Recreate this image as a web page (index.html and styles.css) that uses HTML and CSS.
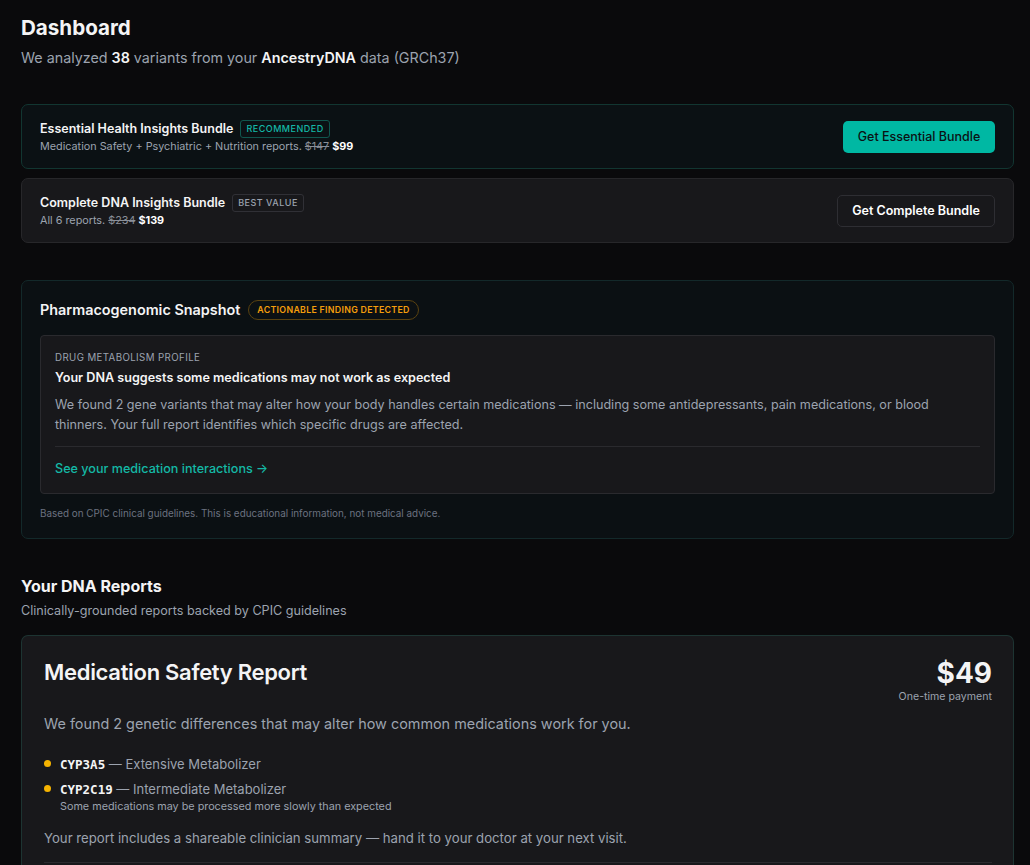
FILE: index.html
```html
<!DOCTYPE html>
<html lang="en">
<head>
    <meta charset="UTF-8">
    <meta name="viewport" content="width=device-width, initial-scale=1.0">
    <title>Dashboard</title>
    <link rel="stylesheet" href="styles.css">
</head>
<body>
    <div class="page">
        <header class="page-head">
            <h1>Dashboard</h1>
            <p class="lead">We analyzed <strong>38</strong> variants from your <strong>AncestryDNA</strong> data (GRCh37)</p>
        </header>

        <!-- Bundle offers -->
        <section class="bundles">
            <div class="bundle bundle-essential">
                <div class="bundle-info">
                    <div class="bundle-title">Essential Health Insights Bundle <span class="tag tag-teal">RECOMMENDED</span></div>
                    <div class="bundle-sub">Medication Safety + Psychiatric + Nutrition reports. <s>$147</s> <b>$99</b></div>
                </div>
                <button class="btn btn-primary">Get Essential Bundle</button>
            </div>
            <div class="bundle bundle-complete">
                <div class="bundle-info">
                    <div class="bundle-title">Complete DNA Insights Bundle <span class="tag tag-gray">BEST VALUE</span></div>
                    <div class="bundle-sub">All 6 reports. <s>$234</s> <b>$139</b></div>
                </div>
                <button class="btn btn-outline">Get Complete Bundle</button>
            </div>
        </section>

        <!-- Snapshot -->
        <section class="snapshot">
            <div class="snapshot-head">
                <h2>Pharmacogenomic Snapshot</h2>
                <span class="pill">ACTIONABLE FINDING DETECTED</span>
            </div>
            <div class="profile">
                <div class="eyebrow">DRUG METABOLISM PROFILE</div>
                <h3>Your DNA suggests some medications may not work as expected</h3>
                <p>We found 2 gene variants that may alter how your body handles certain medications — including some antidepressants, pain medications, or blood thinners. Your full report identifies which specific drugs are affected.</p>
                <a class="profile-link" href="#">See your medication interactions →</a>
            </div>
            <p class="fineprint">Based on CPIC clinical guidelines. This is educational information, not medical advice.</p>
        </section>

        <!-- Reports -->
        <section class="reports">
            <h2>Your DNA Reports</h2>
            <p class="reports-sub">Clinically-grounded reports backed by CPIC guidelines</p>

            <div class="report">
                <div class="report-top">
                    <h3>Medication Safety Report</h3>
                    <div class="price">
                        <div class="price-amount">$49</div>
                        <div class="price-note">One-time payment</div>
                    </div>
                </div>
                <p class="report-lead">We found 2 genetic differences that may alter how common medications work for you.</p>
                <ul class="genes">
                    <li><span class="dot"></span><div><code>CYP3A5</code> — Extensive Metabolizer</div></li>
                    <li><span class="dot"></span><div><code>CYP2C19</code> — Intermediate Metabolizer<div class="gene-note">Some medications may be processed more slowly than expected</div></div></li>
                </ul>
                <p class="report-foot">Your report includes a shareable clinician summary — hand it to your doctor at your next visit.</p>
                <div class="report-rule"></div>
            </div>
        </section>
    </div>
</body>
</html>
```

FILE: styles.css
```css
body {
    margin: 0;
    background-color: #0a0a0c;
    color: #f4f4f5;
    font-family: Inter, "Noto Sans", sans-serif;
}
.page {
    width: 993px;
    padding: 14px 0 0 21px;
}
.page-head h1 {
    margin: 0;
    font-size: 20.6px;
    font-weight: 700;
    line-height: 28px;
}
.lead {
    margin: 6px 0 0;
    font-size: 14.3px;
    line-height: 20px;
    color: #9ca3af;
}
.lead strong {
    color: #f4f4f5;
    font-weight: 600;
}

/* bundles */
.bundles {
    margin-top: 36px;
    display: flex;
    flex-direction: column;
    gap: 9px;
}
.bundle {
    display: flex;
    align-items: center;
    justify-content: space-between;
    height: 65px;
    box-sizing: border-box;
    padding: 0 18px;
    border-radius: 7px;
    border: 1px solid #27272a;
    background-color: #18181b;
}
.bundle-essential {
    background-color: #0b1114;
    border-color: #123631;
}
.bundle-info {
    padding-top: 2px;
}
.bundle-title {
    font-size: 12.5px;
    line-height: 18px;
    font-weight: 600;
    display: flex;
    align-items: center;
    gap: 7px;
}
.bundle-sub {
    font-size: 10.8px;
    line-height: 16px;
    color: #9ca3af;
    margin-top: 1px;
}
.bundle-sub s {
    color: #8a8f98;
}
.bundle-sub b {
    color: #fff;
}
.tag {
    font-size: 9px;
    line-height: 12px;
    font-weight: 500;
    letter-spacing: 0.5px;
    padding: 2px 5px;
    border-radius: 3px;
    border: 1px solid;
}
.tag-teal {
    color: #14b8a6;
    border-color: #10564e;
}
.tag-gray {
    color: #9ca3af;
    border-color: #303036;
}
.btn {
    font-family: inherit;
    font-size: 12.5px;
    height: 32px;
    border-radius: 5px;
    cursor: pointer;
}
.btn-primary {
    background-color: #00b8a3;
    color: #0b1114;
    border: none;
    font-weight: 500;
    padding: 0 10px;
    width: 152px;
}
.btn-outline {
    background-color: #18181b;
    color: #fff;
    border: 1px solid #2e2e33;
    font-weight: 600;
    padding: 0 14px;
    width: 158px;
}

/* snapshot */
.snapshot {
    margin-top: 37px;
    background-color: #0b1013;
    border: 1px solid #13292a;
    border-radius: 7px;
    padding: 18px 18px 18px;
}
.snapshot-head {
    display: flex;
    align-items: center;
    gap: 8px;
    height: 22px;
}
.snapshot-head h2 {
    margin: 0;
    font-size: 14.4px;
    line-height: 22px;
    font-weight: 600;
}
.pill {
    font-size: 8.8px;
    line-height: 12px;
    font-weight: 600;
    letter-spacing: 0.3px;
    color: #f59e0b;
    border: 1px solid #5a4210;
    border-radius: 10px;
    padding: 3px 8px;
}
.profile {
    margin-top: 14px;
    background-color: #18181b;
    border: 1px solid #2a2a2e;
    border-radius: 4px;
    padding: 15px 14px 15px;
}
.eyebrow {
    font-size: 9.7px;
    line-height: 14px;
    letter-spacing: 0.4px;
    color: #9ca3af;
}
.profile h3 {
    margin: 4px 0 0;
    font-size: 12.6px;
    line-height: 18px;
    font-weight: 600;
}
.profile p {
    margin: 8px 0 0;
    font-size: 12.6px;
    line-height: 20px;
    color: #9ca3af;
    padding-bottom: 11px;
    border-bottom: 1px solid #2a2a2e;
}
.profile-link {
    display: block;
    margin-top: 13px;
    font-size: 12.6px;
    line-height: 18px;
    font-weight: 500;
    color: #14b8a6;
    text-decoration: none;
}
.fineprint {
    margin: 12px 0 0;
    font-size: 9.9px;
    line-height: 14px;
    color: #6b7280;
}

/* reports */
.reports {
    margin-top: 36px;
}
.reports h2 {
    margin: 0;
    font-size: 16px;
    line-height: 22px;
    font-weight: 700;
}
.reports-sub {
    margin: 5px 0 0;
    font-size: 12.6px;
    line-height: 18px;
    color: #9ca3af;
}
.report {
    margin-top: 15px;
    background-color: #18181b;
    border: 1px solid #1d3432;
    border-bottom: none;
    border-radius: 7px 7px 0 0;
    padding: 20px 21px 0 22px;
}
.report-top {
    display: flex;
    justify-content: space-between;
    align-items: flex-start;
}
.report-top h3 {
    margin: 2px 0 0;
    font-size: 22px;
    line-height: 28px;
    font-weight: 600;
    letter-spacing: -0.3px;
}
.price {
    text-align: right;
}
.price-amount {
    font-size: 28px;
    font-weight: 700;
    line-height: 34px;
}
.price-note {
    font-size: 10.6px;
    line-height: 14px;
    color: #9ca3af;
}
.report-lead {
    margin: 10px 0 0;
    font-size: 14.4px;
    line-height: 20px;
    color: #9ca3af;
}
.genes {
    list-style: none;
    margin: 22px 0 0;
    padding: 0;
}
.genes li {
    display: flex;
    align-items: flex-start;
    gap: 9px;
    font-size: 13px;
    line-height: 16px;
    color: #9ca3af;
    margin-bottom: 8px;
}
.dot {
    width: 7px;
    height: 7px;
    border-radius: 50%;
    background-color: #f5b301;
    margin-top: 4px;
}
.genes code {
    font-family: "DejaVu Sans Mono", monospace;
    font-weight: 700;
    font-size: 12.5px;
    color: #f4f4f5;
}
.gene-note {
    font-size: 10.8px;
    line-height: 14px;
    margin-top: 2px;
}
.report-foot {
    margin: 15px 0 0;
    font-size: 13.2px;
    line-height: 18px;
    color: #9ca3af;
}
.report-rule {
    margin-top: 15px;
    border-top: 1px solid #2a2a2e;
    height: 20px;
}
```
